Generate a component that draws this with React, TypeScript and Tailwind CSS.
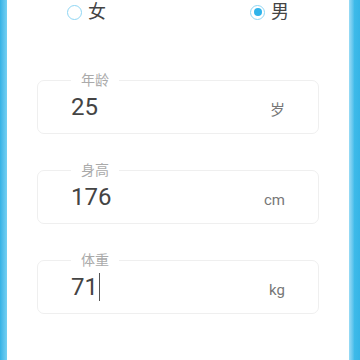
const FIELDS = [
  { label: '年龄', value: '25', unit: '岁', caret: false },
  { label: '身高', value: '176', unit: 'cm', caret: false },
  { label: '体重', value: '71', unit: 'kg', caret: true },
];

function Radio({ checked }: { checked?: boolean }) {
  return (
    <span className="flex h-[15px] w-[15px] items-center justify-center rounded-full border-[1.5px] border-[#8fd6f4]">
      {checked && <span className="h-[8px] w-[8px] rounded-full bg-[#2fb3ea]" />}
    </span>
  );
}

export default function App() {
  return (
    <div
      className="flex h-[360px] w-[360px] overflow-hidden bg-white"
      style={{ fontFamily: 'Roboto, "Noto Sans CJK SC", sans-serif' }}
    >
      {/* left edge */}
      <div className="w-[7px] shrink-0 bg-gradient-to-r from-[#33b2e5] to-[#74d0f2]" />

      <div className="flex flex-1 flex-col">
        {/* gender */}
        <div className="flex h-[24px] items-center pl-[60px] text-[18px] leading-[24px] text-[#444]">
          <label className="flex items-center gap-[6px]">
            <Radio />
            <span>女</span>
          </label>
          <label className="ml-[144px] flex items-center gap-[6px]">
            <Radio checked />
            <span>男</span>
          </label>
        </div>

        {/* inputs */}
        <div className="mt-[46px] flex flex-col gap-[26px] px-[30px]">
          {FIELDS.map((f) => (
            <fieldset
              key={f.label}
              className="rounded-[7px] border border-[#efefef] px-[33px] pb-[12px] pt-[3px]"
            >
              <legend className="px-[10px] text-[14px] leading-[20px] text-[#aaaaaa]">
                {f.label}
              </legend>
              <div className="flex items-baseline justify-between">
                <span className="flex items-center text-[24px] leading-[28px] text-[#444]">
                  {f.value}
                  {f.caret && <span className="ml-[1px] h-[28px] w-px bg-[#555]" />}
                </span>
                <span className="text-[15px] leading-[20px] text-[#777]">{f.unit}</span>
              </div>
            </fieldset>
          ))}
        </div>
      </div>

      {/* right edge */}
      <div className="w-[11px] shrink-0 bg-gradient-to-r from-[#9adcf6] via-[#3dbae9] to-[#35b4e6]" />
    </div>
  );
}
